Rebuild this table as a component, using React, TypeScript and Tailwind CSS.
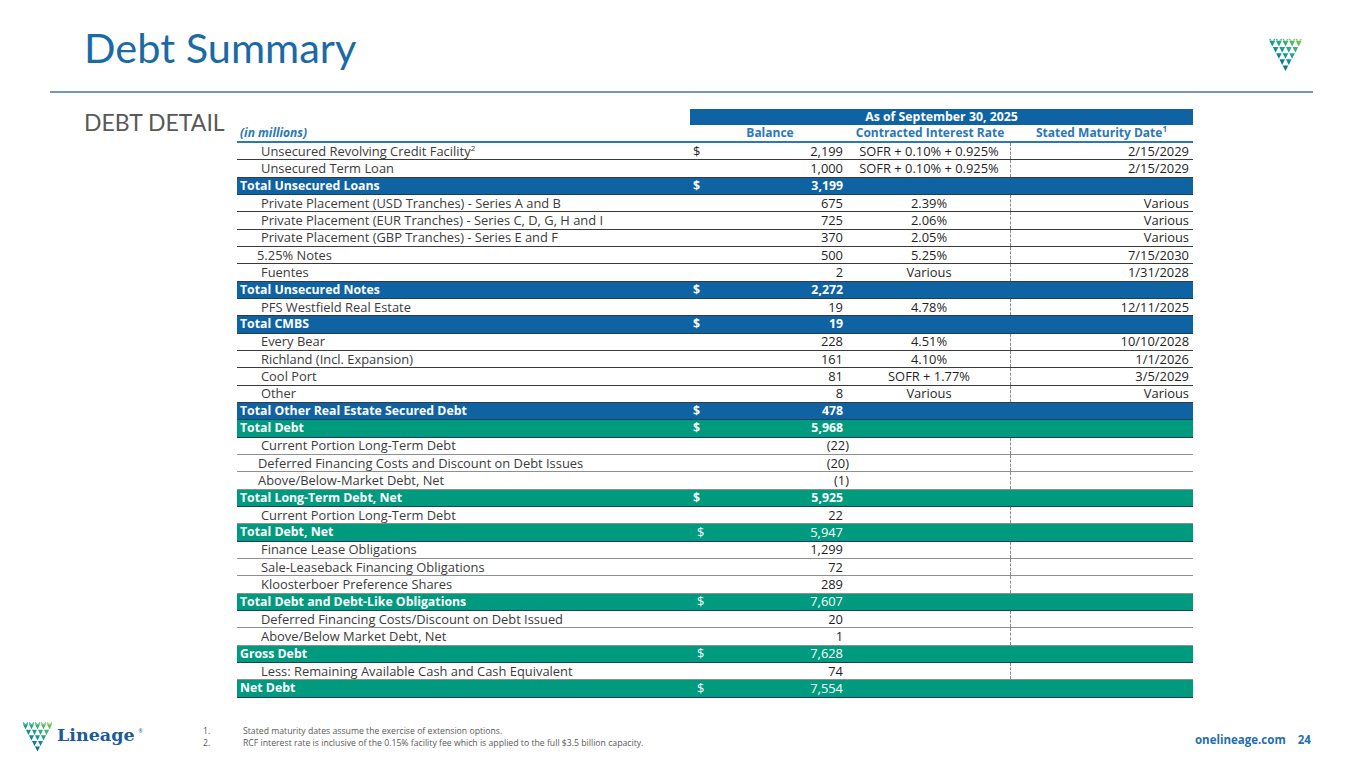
import React from "react";

type Row = {
  l: string;
  t?: "d" | "b" | "g";
  d?: boolean;
  b: string;
  r?: string;
  m?: string;
  sup?: string;
  ind?: number;
  light?: boolean;
  gray?: boolean;
};

const rows: Row[] = [
  { l: "Unsecured Revolving Credit Facility", sup: "2", d: true, b: "2,199", r: "SOFR + 0.10% + 0.925%", m: "2/15/2029" },
  { l: "Unsecured Term Loan", b: "1,000", r: "SOFR + 0.10% + 0.925%", m: "2/15/2029" },
  { l: "Total Unsecured Loans", t: "b", d: true, b: "3,199" },
  { l: "Private Placement (USD Tranches) - Series A and B", b: "675", r: "2.39%", m: "Various" },
  { l: "Private Placement (EUR Tranches) - Series C, D, G, H and I", b: "725", r: "2.06%", m: "Various" },
  { l: "Private Placement (GBP Tranches) - Series E and F", b: "370", r: "2.05%", m: "Various" },
  { l: "5.25% Notes", ind: 20, b: "500", r: "5.25%", m: "7/15/2030" },
  { l: "Fuentes", b: "2", r: "Various", m: "1/31/2028" },
  { l: "Total Unsecured Notes", t: "b", d: true, b: "2,272" },
  { l: "PFS Westfield Real Estate", b: "19", r: "4.78%", m: "12/11/2025" },
  { l: "Total CMBS", t: "b", d: true, b: "19" },
  { l: "Every Bear", b: "228", r: "4.51%", m: "10/10/2028" },
  { l: "Richland (Incl. Expansion)", b: "161", r: "4.10%", m: "1/1/2026" },
  { l: "Cool Port", b: "81", r: "SOFR + 1.77%", m: "3/5/2029" },
  { l: "Other", b: "8", r: "Various", m: "Various" },
  { l: "Total Other Real Estate Secured Debt", t: "b", d: true, b: "478" },
  { l: "Total Debt", t: "g", d: true, b: "5,968" },
  { l: "Current Portion Long-Term Debt", b: "(22)", gray: true },
  { l: "Deferred Financing Costs and Discount on Debt Issues", ind: 21, b: "(20)", gray: true },
  { l: "Above/Below-Market Debt, Net", ind: 21, b: "(1)", gray: true },
  { l: "Total Long-Term Debt, Net", t: "g", d: true, b: "5,925" },
  { l: "Current Portion Long-Term Debt", b: "22", gray: true },
  { l: "Total Debt, Net", t: "g", d: true, b: "5,947", light: true },
  { l: "Finance Lease Obligations", b: "1,299", gray: true },
  { l: "Sale-Leaseback Financing Obligations", b: "72", gray: true },
  { l: "Kloosterboer Preference Shares", b: "289", gray: true },
  { l: "Total Debt and Debt-Like Obligations", t: "g", d: true, b: "7,607", light: true },
  { l: "Deferred Financing Costs/Discount on Debt Issued", b: "20", gray: true },
  { l: "Above/Below Market Debt, Net", b: "1", gray: true },
  { l: "Gross Debt", t: "g", d: true, b: "7,628", light: true },
  { l: "Less: Remaining Available Cash and Cash Equivalent", b: "74", gray: true },
  { l: "Net Debt", t: "g", d: true, b: "7,554", light: true },
];

function Shield({ w, h, id }: { w: number; h: number; id: string }) {
  const tris: string[] = [];
  const s = 8;
  for (let row = 0; row < 5; row++) {
    const n = 5 - row;
    for (let i = 0; i < n; i++) {
      const x = row * (s / 2) + i * s;
      const y = row * 7.4 + 3;
      tris.push(`M${x + 0.6} ${y} L${x + s - 0.6} ${y} L${x + s / 2} ${y + 6.8} Z`);
    }
  }
  for (let i = 0; i < 5; i++) {
    const x = i * s;
    tris.push(`M${x + 0.6} 2.4 L${x + 0.6} 0 L${x + s / 2} 2.4 Z`);
    tris.push(`M${x + s / 2} 2.4 L${x + s - 0.6} 0 L${x + s - 0.6} 2.4 Z`);
  }
  return (
    <svg width={w} height={h} viewBox="0 0 40 40">
      <defs>
        <linearGradient id={id} x1="1" y1="0" x2="0.2" y2="1">
          <stop offset="0" stopColor="#8cc63f" />
          <stop offset="0.35" stopColor="#2fb07a" />
          <stop offset="0.6" stopColor="#0e8f9c" />
          <stop offset="1" stopColor="#0d4f9a" />
        </linearGradient>
      </defs>
      <path d={tris.join(" ")} fill={`url(#${id})`} />
    </svg>
  );
}

function TableRow({ r }: { r: Row }) {
  const colored = r.t === "b" || r.t === "g";
  const bg = r.t === "b" ? "bg-[#0f63a3]" : r.t === "g" ? "bg-[#009b7e]" : "bg-white";
  const border = colored
    ? "border-b border-[#1d3f5c]"
    : r.gray
    ? "border-b border-[#8f8f8f]"
    : "border-b border-[#3a3a3a]";
  const paren = r.b.startsWith("(");
  return (
    <div className={`grid grid-cols-[453px_160px_160px_183px] h-[17.34px] items-center leading-none ${bg} ${border}`}>
      <div
        className={`whitespace-nowrap ${colored ? "pl-[3px] font-bold text-white text-[12.3px]" : "text-[#3b3b3b]"}`}
        style={colored ? undefined : { paddingLeft: r.ind ?? 24 }}
      >
        {r.l}
        {r.sup && <sup className="text-[8px] -top-[5px]">{r.sup}</sup>}
      </div>
      <div
        className={`flex justify-between ${
          colored ? (r.light ? "text-white" : "text-white font-bold text-[12.3px]") : "text-[#1f1f1f]"
        } ${r.light ? "pl-[7px]" : "pl-[3px]"} ${paren ? "pr-[1px]" : "pr-[7px]"}`}
      >
        <span>{r.d ? "$" : ""}</span>
        <span>{r.b}</span>
      </div>
      <div className="text-center text-[#1f1f1f] pr-[2px] whitespace-nowrap">{r.r ?? ""}</div>
      <div
        className={`h-full flex items-center justify-end pr-[4px] text-[#1f1f1f] ${
          colored ? "" : "border-l border-dashed border-[#8a8a8a]"
        }`}
      >
        {r.m ?? ""}
      </div>
    </div>
  );
}

export default function App() {
  return (
    <div
      className="w-[1365px] h-[768px] bg-white flex flex-col overflow-hidden"
      style={{ fontFamily: "'Open Sans', Lato, sans-serif" }}
    >
      <div className="flex justify-between items-start pl-[84px] pr-[63px] pt-[27px] h-[91px]">
        <div
          className="text-[41.5px] leading-none text-[#1b6aa5]"
          style={{ fontFamily: "Lato, sans-serif" }}
        >
          Debt Summary
        </div>
        <div className="pt-[11px]">
          <Shield w={33} h={34} id="g1" />
        </div>
      </div>
      <div className="ml-[50px] w-[1263px] h-[2px] bg-[#7399b3]" />
      <div className="flex mt-[16px]">
        <div className="w-[237px] pl-[84px] shrink-0">
          <div
            className="pt-[2px] text-[23px] leading-none text-[#595959] whitespace-nowrap"
            style={{ fontFamily: "Lato, sans-serif" }}
          >
            DEBT DETAIL
          </div>
        </div>
        <div className="w-[956px] text-[12.9px] shrink-0">
          <div className="grid grid-cols-[453px_503px] h-[16px] text-[12.3px]">
            <div />
            <div className="bg-[#0f63a3] text-white font-bold flex items-center justify-center leading-none">
              As of September 30, 2025
            </div>
          </div>
          <div className="grid grid-cols-[453px_160px_160px_183px] h-[18px] items-center leading-none font-bold text-[12px] text-[#2a78b7] border-b-2 border-[#2a78b7]">
            <div className="italic pl-[3px]">(in millions)</div>
            <div className="text-center">Balance</div>
            <div className="text-center whitespace-nowrap">Contracted Interest Rate</div>
            <div className="text-center whitespace-nowrap">
              Stated Maturity Date<sup className="text-[8px] -top-[5px]">1</sup>
            </div>
          </div>
          {rows.map((r, i) => (
            <TableRow key={i} r={r} />
          ))}
        </div>
      </div>
      <div className="mt-auto h-[50px] flex items-start pt-[4px]">
        <div className="flex items-center pl-[22px] w-[203px] gap-[4px] shrink-0">
          <Shield w={31} h={30} id="g2" />
          <span
            className="text-[17.5px] font-bold text-[#1b5b98] leading-none -mt-[2px]"
            style={{ fontFamily: "'DejaVu Serif', serif" }}
          >
            Lineage
          </span>
          <span className="text-[5px] text-[#1b5b98] -mt-[10px]">®</span>
        </div>
        <div className="text-[8.7px] text-[#595959] leading-[12px] pt-[3px] w-[990px] shrink-0">
          <div className="flex">
            <span className="w-[40px]">1.</span>
            <span>Stated maturity dates assume the exercise of extension options.</span>
          </div>
          <div className="flex">
            <span className="w-[40px]">2.</span>
            <span>RCF interest rate is inclusive of the 0.15% facility fee which is applied to the full $3.5 billion capacity.</span>
          </div>
        </div>
        <div className="flex items-center pt-[12px] pl-[2px] text-[11.5px] font-bold text-[#1f6eb0] leading-none">
          <span>onelineage.com</span>
          <span className="ml-[12px]">24</span>
        </div>
      </div>
    </div>
  );
}
